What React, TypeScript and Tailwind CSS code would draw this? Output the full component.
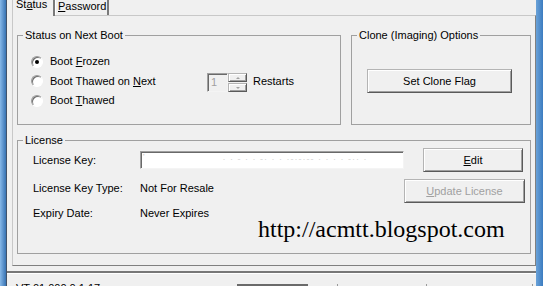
import React from "react";

const raised =
  "flex items-center justify-center border border-t-[#b4b4b4] border-l-[#b4b4b4] border-r-[#5a5a5a] border-b-[#5a5a5a] bg-[#f0f0f0] shadow-[inset_1px_1px_white,inset_-1px_-1px_#a0a0a0]";
const sunken =
  "border border-t-[#a0a0a0] border-l-[#a0a0a0] border-r-[#f4f4f4] border-b-[#f4f4f4] shadow-[inset_1px_1px_#696969]";
const group = "border border-[#a0a0a0]";
const legend = "ml-[5px] px-[2px] leading-[13px]";

function Radio({ checked }: { checked?: boolean }) {
  return (
    <span className="flex h-[12px] w-[12px] shrink-0 items-center justify-center rounded-full border border-[#9a9a9a] border-r-white border-b-white bg-white shadow-[inset_1px_1px_#6d6d6d]">
      {checked && <span className="h-[4px] w-[4px] rounded-full bg-black" />}
    </span>
  );
}

function Spinner() {
  return (
    <div className="mt-[3px] flex h-[19px]">
      <div className={`w-[21px] bg-[#f0f0f0] pl-[3px] leading-[17px] text-[#a0a0a0] ${sunken}`}>1</div>
      <div className="flex w-[19px] flex-col">
        <div className={`h-[9px] ${raised}`}>
          <span className="h-0 w-0 border-x-[2px] border-b-[2px] border-x-transparent border-b-[#a0a0a0]" />
        </div>
        <div className={`mt-px h-[9px] ${raised}`}>
          <span className="h-0 w-0 border-x-[2px] border-t-[2px] border-x-transparent border-t-[#a0a0a0]" />
        </div>
      </div>
    </div>
  );
}

export default function App() {
  return (
    <div className="relative flex h-[286px] w-[543px] overflow-hidden bg-[#f0f0f0] font-['Liberation_Sans',Arial,sans-serif] text-[11px] text-black">
      <div className="w-[6px] bg-gradient-to-r from-[#86b8e8] to-[#3773b3]" />
      <div className="w-px bg-[#41536a]" />

      <div className="flex w-[529px] flex-col">
        {/* tabs */}
        <div className="flex h-[15px] shrink-0 pl-[5px]">
          <div className="relative z-10 h-[16px] w-[43px] border-l border-r-2 border-l-[#c8c8c8] border-r-[#7a7a7a] bg-[#f0f0f0] pl-[3px]">
            <span className="-mt-[2px] block leading-[13px]">
              St<span className="underline">a</span>tus
            </span>
          </div>
          <div className="h-[15px] w-[54px] border-l border-r-2 border-l-white border-r-[#7a7a7a] pl-[2px]">
            <span className="block leading-[13px]">
              <span className="underline">P</span>assword
            </span>
          </div>
        </div>

        {/* tab page */}
        <div className="ml-[5px] flex h-[251px] w-[524px] shrink-0 flex-col border border-[#c8c8c8] border-r-[#808080] border-b-[#808080] pl-[4px] pr-[3px] pt-[13px]">
          <div className="flex gap-[10px]">
            <fieldset className={`h-[96px] w-[324px] ${group}`}>
              <legend className={legend}>Status on Next Boot</legend>
              <div className="pt-[10px]">
                <div className="flex h-[19px] items-center pl-[13px]">
                  <Radio checked />
                  <span className="ml-[7px]">
                    Boot <span className="underline">F</span>rozen
                  </span>
                </div>
                <div className="flex h-[20px] items-center pl-[13px]">
                  <Radio />
                  <span className="ml-[7px] w-[157px]">
                    Boot Thawed on <span className="underline">N</span>ext
                  </span>
                  <Spinner />
                  <span className="ml-[6px]">Restarts</span>
                </div>
                <div className="flex h-[19px] items-center pl-[13px]">
                  <Radio />
                  <span className="ml-[7px]">
                    Boot <span className="underline">T</span>hawed
                  </span>
                </div>
              </div>
            </fieldset>

            <fieldset className={`h-[96px] w-[180px] ${group}`}>
              <legend className={legend}>Clone (Imaging) Options</legend>
              <div className="pl-[15px] pt-[27px]">
                <button className={`h-[24px] w-[145px] ${raised}`}>Set Clone Flag</button>
              </div>
            </fieldset>
          </div>

          <fieldset className={`mt-[9px] h-[120px] w-[514px] ${group}`}>
            <legend className={legend}>License</legend>
            <div className="flex pl-[15px]">
              <div className="w-[371px]">
                <div className="flex h-[26px] items-center">
                  <span className="w-[107px]">License Key:</span>
                  <div className={`flex h-[18px] w-[264px] items-center bg-white ${sunken}`}>
                    <span className="ml-[2px] -mt-[6px] text-[8px] text-[#b8b8b8]">'</span>
                    <span className="ml-[78px] text-[9px] tracking-[1px] text-[#d4d4d4]">
                      · · - · · -· · · ·-·-·-- · · · · -·· ·
                    </span>
                  </div>
                </div>
                <div className="mt-[3px] flex h-[25px] items-center">
                  <span className="w-[107px]">License Key Type:</span>
                  <span>Not For Resale</span>
                </div>
                <div className="flex h-[25px] items-center">
                  <span className="w-[107px]">Expiry Date:</span>
                  <span>Never Expires</span>
                </div>
              </div>
              <div className="flex w-[121px] flex-col items-end pt-[1px]">
                <button className={`mr-[2px] h-[24px] w-[100px] ${raised}`}>
                  <span className="underline">E</span>dit
                </button>
                <button className={`mt-[7px] h-[24px] w-[121px] text-[#a0a0a0] ${raised}`}>
                  <span className="underline">U</span>pdate License
                </button>
              </div>
            </div>
          </fieldset>
        </div>

        {/* status bar */}
        <div className="mt-[5px] h-[3px] shrink-0 border-b border-b-white bg-[#777]" />
        <div className="flex shrink-0 pt-[8px]">
          <div className="w-[230px] pl-[9px] leading-[13px]">VT 01.000.0 1.17</div>
          <div className="mt-[2px] h-[10px] w-[71px] border-t-2 border-[#6a6a6a] bg-[#dcdcdc]" />
          <div className="mt-[2px] h-[10px] w-[30px] border-r border-[#9a9a9a]" />
          <div className="mt-[2px] h-[10px] w-[89px] border-r border-[#9a9a9a]" />
          <div className="mt-[2px] h-[10px] w-[106px] border-r border-[#9a9a9a]" />
        </div>
      </div>

      <div className="w-[7px] bg-gradient-to-r from-[#6aa2d8] to-[#3c7cc0]" />

      <div className="pointer-events-none absolute left-[258px] top-[217px] font-['Liberation_Serif',serif] text-[24px] leading-[24px]">
        http://acmtt.blogspot.com
      </div>
    </div>
  );
}
